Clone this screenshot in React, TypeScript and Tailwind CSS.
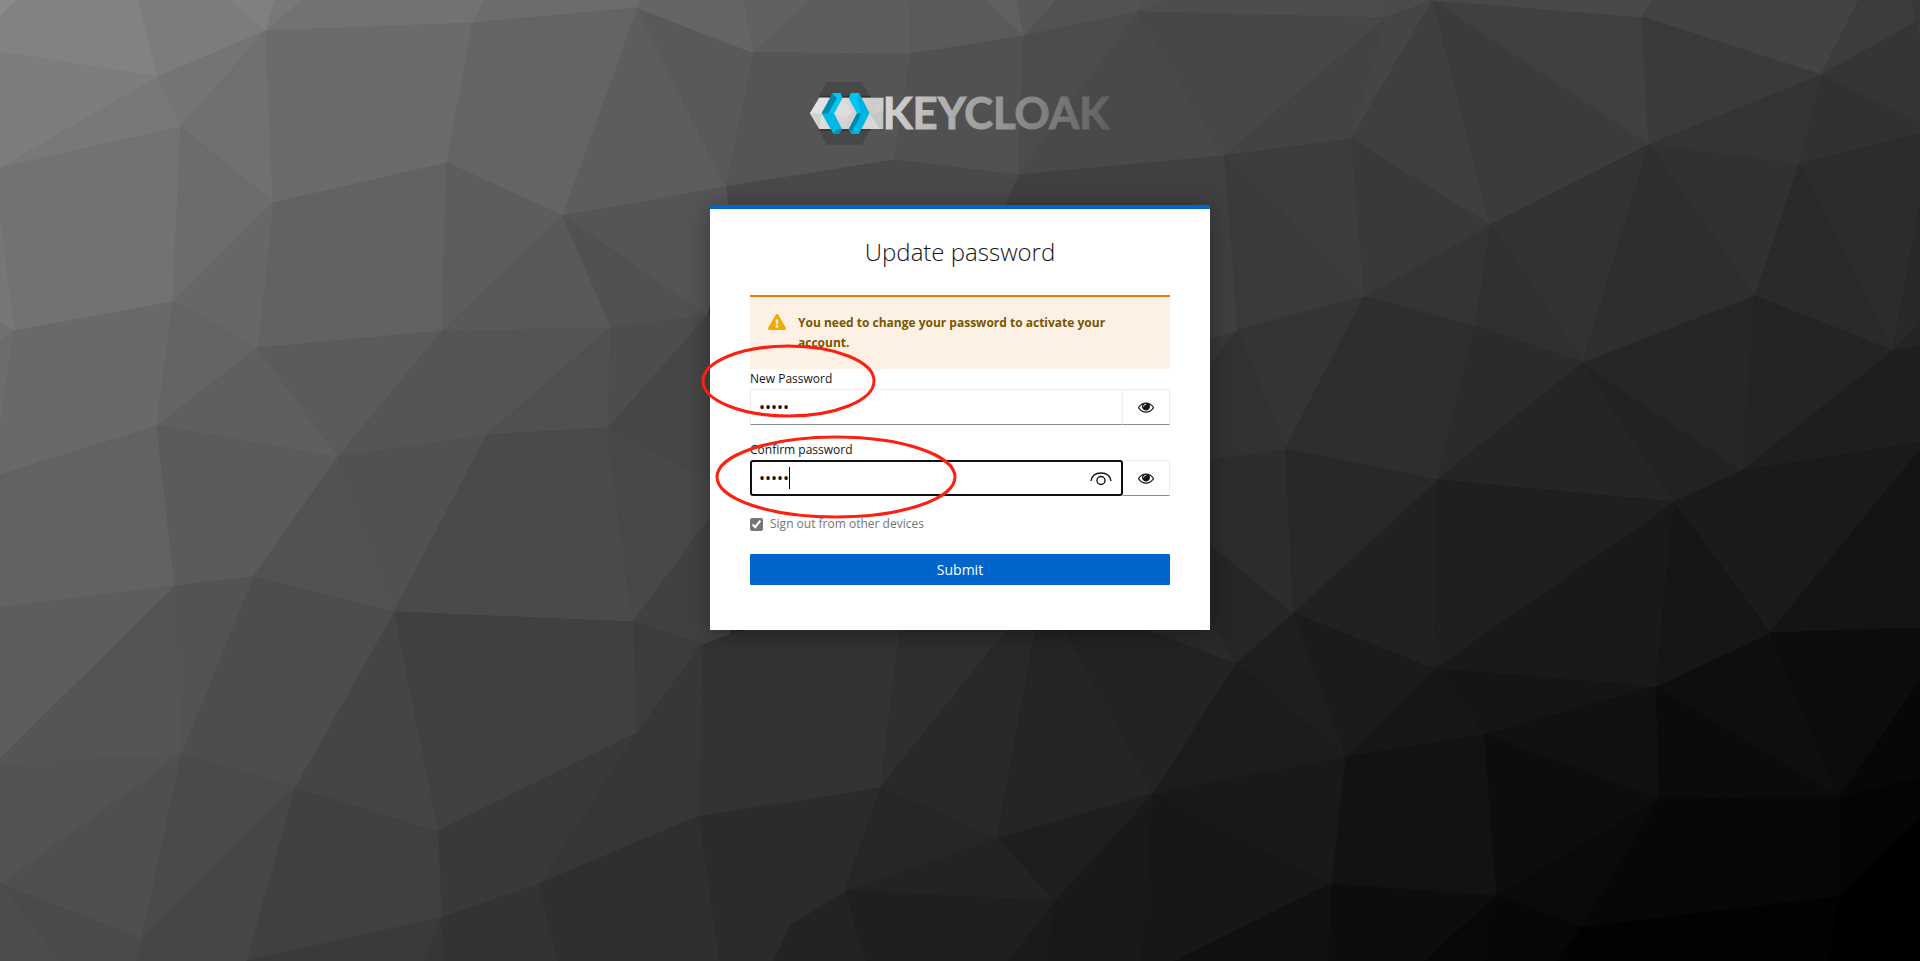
import { ReactNode } from 'react';
import { FaExclamationTriangle } from 'react-icons/fa';

// Background facets: fill + polygon points
const FACETS: [string, string][] = [
    ['#8a8a8a', '0,0 17,0 0,16'],
    ['#828282', '17,0 139,0 158,77 0,52 0,16'],
    ['#7c7c7c', '139,0 228,0 266,31 158,77'],
    ['#808080', '228,0 275,0 266,31'],
    ['#787878', '275,0 303,0 266,31'],
    ['#727272', '303,0 485,0 473,23 266,31'],
    ['#6c6c6c', '485,0 640,0 638,8 473,23'],
    ['#7d7d7d', '0,52 158,77 0,168'],
    ['#787878', '158,77 181,127 0,168'],
    ['#747474', '158,77 266,31 181,127'],
    ['#727272', '0,168 181,127 173,302 14,331 0,222'],
    ['#777777', '0,222 14,331 0,323'],
    ['#707070', '0,323 14,331 0,342'],
    ['#6c6c6c', '0,342 14,331 0,430'],
    ['#707070', '181,127 266,31 273,203'],
    ['#6c6c6c', '181,127 273,203 173,302'],
    ['#6b6b6b', '266,31 473,23 447,163 273,203'],
    ['#646464', '473,23 638,8 563,216 447,163'],
    ['#626262', '273,203 447,163 442,331 258,348'],
    ['#676767', '173,302 273,203 258,348'],
    ['#5d5d5d', '447,163 563,216 442,331'],
    ['#696969', '14,331 173,302 157,426 0,475 0,430'],
    ['#646464', '173,302 258,348 157,426'],
    ['#5f5f5f', '157,426 258,348 338,457'],
    ['#5b5b5b', '258,348 442,331 338,457'],
    ['#555555', '442,331 487,435 338,457'],
    ['#545454', '442,331 611,327 487,435'],
    ['#595959', '442,331 563,216 611,327'],
    ['#505050', '487,435 611,327 608,428'],
    ['#626262', '0,475 157,426 175,586 0,608'],
    ['#5b5b5b', '157,426 338,457 253,577 175,586'],
    ['#525252', '338,457 394,612 253,577'],
    ['#515151', '338,457 487,435 394,612'],
    ['#4a4a4a', '487,435 608,428 633,622 394,612'],
    ['#5d5d5d', '638,8 726,187 563,216'],
    ['#595959', '638,8 754,53 726,187'],
    ['#656565', '638,8 640,0 744,0 754,53'],
    ['#616161', '744,0 811,0 754,53'],
    ['#5d5d5d', '811,0 910,0 911,54 754,53'],
    ['#5a5a5a', '910,0 986,0 1024,36 911,54'],
    ['#606060', '986,0 1017,0 1024,36'],
    ['#595959', '1017,0 1057,0 1024,36'],
    ['#525252', '1057,0 1145,0 1138,12 1024,36'],
    ['#505050', '1145,0 1168,0 1138,12'],
    ['#4d4d4d', '1168,0 1384,0 1386,18 1138,12'],
    ['#555555', '754,53 911,54 894,160 726,187'],
    ['#515151', '911,54 1024,36 1018,175 894,160'],
    ['#4c4c4c', '1024,36 1138,12 1018,175'],
    ['#494949', '1138,12 1224,156 1018,175'],
    ['#474747', '1138,12 1386,18 1224,156'],
    ['#434343', '1386,18 1351,139 1224,156'],
    ['#4b4b4b', '1384,0 1433,0 1386,18'],
    ['#454545', '1386,18 1433,0 1351,139'],
    ['#3f3f3f', '1433,0 1490,225 1351,139'],
    ['#3b3b3b', '1433,0 1649,145 1490,225'],
    ['#404040', '1433,0 1642,17 1649,145'],
    ['#494949', '1433,0 1653,0 1642,17'],
    ['#434343', '1653,0 1859,0 1821,75 1642,17'],
    ['#3a3a3a', '1642,17 1821,75 1649,145'],
    ['#3c3c3c', '1859,0 1913,0 1916,22 1821,75'],
    ['#383838', '1913,0 1920,0 1920,50 1916,22'],
    ['#353535', '1821,75 1916,22 1920,50 1920,124'],
    ['#313131', '1821,75 1920,124 1920,133 1799,165'],
    ['#343434', '1649,145 1821,75 1799,165'],
    ['#2c2c2c', '1799,165 1920,133 1920,205 1893,351'],
    ['#292929', '1920,205 1893,351 1920,325'],
    ['#242424', '1920,325 1893,351 1920,347'],
    ['#313131', '1649,145 1799,165 1755,296'],
    ['#2a2a2a', '1799,165 1893,351 1755,296'],
    ['#323232', '1490,225 1649,145 1583,363'],
    ['#2e2e2e', '1649,145 1755,296 1583,363'],
    ['#303030', '1490,225 1583,363 1475,326'],
    ['#343434', '1490,225 1475,326 1364,297'],
    ['#393939', '1351,139 1490,225 1364,297'],
    ['#3d3d3d', '1224,156 1351,139 1364,297'],
    ['#3a3a3a', '1224,156 1364,297 1237,330'],
    ['#343434', '1237,330 1364,297 1285,449'],
    ['#2e2e2e', '1364,297 1475,326 1437,480 1285,449'],
    ['#2b2b2b', '1475,326 1583,363 1437,480'],
    ['#252525', '1583,363 1674,502 1437,480'],
    ['#222222', '1583,363 1742,471 1674,502'],
    ['#262626', '1583,363 1755,296 1742,471'],
    ['#242424', '1755,296 1893,351 1742,471'],
    ['#1f1f1f', '1893,351 1920,347 1920,427'],
    ['#1e1e1e', '1893,351 1920,427 1920,443 1742,471'],
    ['#1a1a1a', '1742,471 1920,443 1920,450 1770,633'],
    ['#1b1b1b', '1742,471 1770,633 1674,502'],
    ['#141414', '1920,450 1920,628 1770,633'],
    ['#0c0c0c', '1770,633 1920,628 1920,681 1839,798'],
    ['#070707', '1920,681 1920,778 1839,798'],
    ['#040404', '1839,798 1920,778 1920,820 1839,896'],
    ['#000000', '1839,896 1920,820 1920,961 1829,961'],
    ['#020202', '1839,896 1580,927 1584,961 1829,961'],
    ['#070707', '1659,799 1839,798 1839,896 1580,927'],
    ['#0a0a0a', '1659,799 1580,927 1496,896'],
    ['#0e0e0e', '1655,687 1770,633 1839,798'],
    ['#0b0b0b', '1655,687 1839,798 1659,799'],
    ['#161616', '1674,502 1770,633 1655,687'],
    ['#191919', '1674,502 1655,687 1434,669'],
    ['#1f1f1f', '1437,480 1674,502 1434,669'],
    ['#212121', '1437,480 1434,669 1293,613'],
    ['#282828', '1285,449 1437,480 1293,613'],
    ['#151515', '1434,669 1655,687 1484,735'],
    ['#171717', '1434,669 1484,735 1345,757'],
    ['#1b1b1b', '1293,613 1434,669 1345,757'],
    ['#111111', '1484,735 1655,687 1659,799'],
    ['#0d0d0d', '1484,735 1659,799 1496,896'],
    ['#121212', '1345,757 1484,735 1496,896 1331,884'],
    ['#0d0d0d', '1331,884 1496,896 1425,961 1328,961'],
    ['#080808', '1496,896 1484,961 1425,961'],
    ['#070707', '1496,896 1580,927 1557,961 1484,961'],
    ['#030303', '1580,927 1584,961 1557,961'],
    ['#191919', '1153,793 1345,757 1331,884'],
    ['#171717', '1153,793 1331,884 1175,961 1140,961'],
    ['#111111', '1331,884 1328,961 1175,961'],
    ['#1e1e1e', '1236,663 1293,613 1345,757'],
    ['#1c1c1c', '1236,663 1345,757 1153,793'],
    ['#191919', '1153,793 1141,961 1118,961 1055,901'],
    ['#181818', '1055,901 1118,961 1048,961'],
    ['#1a1a1a', '1055,901 1048,961 1008,961'],
    ['#1e1e1e', '997,838 1153,793 1055,901'],
    ['#232323', '997,838 1055,901 845,891'],
    ['#1f1f1f', '845,891 1055,901 1008,961 865,961'],
    ['#232323', '845,891 865,961 773,961 790,925'],
    ['#2b2b2b', '699,816 881,787 845,891 790,925 773,961 719,961'],
    ['#262626', '881,787 997,838 845,891'],
    ['#333333', '702,644 762,625 901,625 881,787 699,816'],
    ['#2f2f2f', '901,625 1011,625 881,787'],
    ['#292929', '1011,625 1037,625 997,838 881,787'],
    ['#252525', '1037,625 1063,625 1153,793 997,838'],
    ['#232323', '1063,625 1135,625 1236,663 1153,793'],
    ['#2a2a2a', '1135,625 1205,600 1236,663'],
    ['#262626', '1205,610 1205,540 1293,613 1236,663'],
    ['#2d2d2d', '1285,449 1293,613 1205,540 1205,450'],
    ['#323232', '1237,330 1285,449 1205,460 1205,370'],
    ['#383838', '1205,340 1237,330 1205,370'],
    ['#404040', '1018,175 1224,156 1237,330 1205,340 1000,340 1000,218'],
    ['#494949', '894,160 1018,175 1000,218 1000,260 722,260 726,187'],
    ['#555555', '563,216 726,187 730,230 707,316'],
    ['#515151', '563,216 707,316 611,327'],
    ['#4d4d4d', '611,327 707,316 608,428'],
    ['#464646', '608,428 707,316 730,300 730,491'],
    ['#484848', '608,428 730,491 633,622'],
    ['#414141', '633,622 730,491 730,634 702,644'],
    ['#3c3c3c', '633,622 702,644 637,733'],
    ['#373737', '637,733 702,644 699,816'],
    ['#363636', '637,733 699,816 539,884'],
    ['#404040', '394,612 633,622 637,733 438,831'],
    ['#393939', '438,831 637,733 539,884 441,918'],
    ['#2f2f2f', '539,884 699,816 719,961 558,961'],
    ['#333333', '441,918 539,884 558,961 445,961'],
    ['#363636', '441,918 445,961 423,961'],
    ['#404040', '295,787 438,831 441,918 246,961'],
    ['#3a3a3a', '246,961 441,918 423,961'],
    ['#454545', '295,787 394,612 438,831'],
    ['#4d4d4d', '253,577 394,612 295,787 181,754'],
    ['#4a4a4a', '181,754 295,787 141,939'],
    ['#474747', '141,939 295,787 246,961'],
    ['#464646', '141,939 246,961 136,961'],
    ['#4f4f4f', '0,884 181,754 141,939'],
    ['#5d5d5d', '0,608 175,586 0,759'],
    ['#555555', '175,586 181,754 0,765 0,759'],
    ['#535353', '175,586 253,577 181,754'],
    ['#535353', '0,765 181,754 0,884'],
    ['#4a4a4a', '0,884 141,939 136,961 60,961'],
    ['#4d4d4d', '0,884 60,961 0,961'],
];

function PolygonBackground() {
    return (
        <svg
            className="absolute inset-0 w-full h-full"
            viewBox="0 0 1920 961"
            preserveAspectRatio="xMidYMid slice"
            aria-hidden="true"
        >
            {FACETS.map(([fill, points], i) => (
                <polygon key={i} points={points} fill={fill} stroke={fill} strokeWidth="1" strokeLinejoin="round" />
            ))}
        </svg>
    );
}

function KeycloakLogo() {
    return (
        <svg width="308" height="72" viewBox="0 0 924 216" role="img" aria-label="Keycloak">
            <defs>
                <linearGradient id="kc-text" gradientUnits="userSpaceOnUse" x1="240" y1="0" x2="912" y2="40">
                    <stop offset="0" stopColor="#d4d4d4" />
                    <stop offset="0.3" stopColor="#adadad" />
                    <stop offset="0.65" stopColor="#868686" />
                    <stop offset="1" stopColor="#606060" />
                </linearGradient>
                <linearGradient id="kc-band" x1="0" y1="0" x2="1" y2="0.3">
                    <stop offset="0" stopColor="#ececec" />
                    <stop offset="1" stopColor="#c6c6c6" />
                </linearGradient>
            </defs>
            <polygon points="62,12 168,12 218,106 168,200 62,200 14,106" fill="#484848" />
            <path d="M40 56H194M40 156H194" stroke="#3a3232" strokeWidth="5" />
            <polygon points="12,106 40,59 232,59 232,153 40,153" fill="url(#kc-band)" />
            <polygon points="12,106 40,59 70,59 47,106" fill="#e2e2e2" />
            <polygon points="12,106 47,106 40,153" fill="#d2d2d2" />
            <polygon points="84,106 108,70 140,100 120,120" fill="#dedede" />
            <polygon points="190,106 232,59 232,100" fill="#cecece" />
            <polygon points="190,106 222,153 170,153" fill="#d8d8d8" />

            <polygon points="47,106 80,45 103,45 109,60 84,106 108,153 99,167 82,167" fill="#00b8e3" />
            <polygon points="47,106 79,48 93,60 68,106" fill="#008aaa" />
            <polygon points="80,45 103,45 109,60 84,106 68,106 93,60" fill="#00c6f2" />
            <polygon points="82,167 92,153 108,153 99,167" fill="#0095b8" />

            <polygon points="128,60 135,45 159,45 190,106 158,167 136,167 128,154 153,106" fill="#00c6f2" />
            <polygon points="153,60 159,45 190,106 168,106" fill="#00b0dc" />
            <polygon points="153,106 168,106 137,165 128,154" fill="#008aaa" />
            <polygon points="168,106 190,106 158,167 137,165" fill="#00b8e3" />

            <text
                x="230"
                y="153"
                fontSize="131"
                fontWeight="700"
                fontFamily="Lato, sans-serif"
                fill="url(#kc-text)"
                stroke="url(#kc-text)"
                strokeWidth="3"
            >
                KEYCLOAK
            </text>
        </svg>
    );
}

function EyeIcon() {
    return (
        <svg width="16" height="16" viewBox="0 0 1792 1792" fill="currentColor" aria-hidden="true">
            <path d="M1664 960q-152-236-381-353 61 104 61 225 0 185-131.5 316.5t-316.5 131.5-316.5-131.5-131.5-316.5q0-121 61-225-229 117-381 353 133 205 333.5 326.5t434.5 121.5 434.5-121.5 333.5-326.5zm-720-384q0-20-14-34t-34-14q-125 0-214.5 89.5t-89.5 214.5q0 20 14 34t34 14 34-14 14-34q0-86 61-147t147-61q20 0 34-14t14-34zm848 384q0 34-20 69-140 230-376.5 368.5t-499.5 138.5-499.5-139-376.5-368q-20-35-20-69t20-69q140-229 376.5-368t499.5-139 499.5 139 376.5 368q20 35 20 69z" />
        </svg>
    );
}

interface PasswordFieldProps {
    id: string;
    label: string;
    active?: boolean;
    children?: ReactNode;
}

function PasswordField({ id, label, active = false, children }: PasswordFieldProps) {
    const border = active
        ? 'border-2 border-[#101010] rounded-[3px] px-[7px]'
        : 'border border-[#ededed] border-b-[#8a8d90] px-2';

    return (
        <div>
            <label htmlFor={id} className="block text-xs leading-5 text-[#151515]">
                {label}
            </label>
            <div className="flex h-9">
                <div className="relative flex-1">
                    <input
                        id={id}
                        type="password"
                        defaultValue="admin"
                        className={`block w-full h-full bg-white text-base text-[#151515] outline-none ${border}`}
                    />
                    {children}
                </div>
                <button
                    type="button"
                    aria-label="Show password"
                    className="w-[47px] flex items-center justify-center bg-white text-[#151515] border border-l-0 border-[#ededed] border-b-[#8a8d90]"
                >
                    <EyeIcon />
                </button>
            </div>
        </div>
    );
}

export default function App() {
    return (
        <div className="relative min-h-screen bg-[#2b2b2b] font-['Open_Sans',sans-serif]">
            <PolygonBackground />

            <div className="relative flex flex-col items-center pt-[78px]">
                <header className="mb-[55px]">
                    <KeycloakLogo />
                </header>

                <main className="relative w-full max-w-[500px] bg-white border-t-4 border-[#0066cc] px-10 pt-[27px] pb-[45px] shadow-[0_4px_24px_rgba(0,0,0,0.35)]">
                    <h1 className="mb-[27px] text-center text-2xl font-light text-[#151515]">Update password</h1>

                    <div role="alert" className="flex gap-3 border-t-2 border-[#ec7a08] bg-[#fdf1e5] py-4 pl-[18px] pr-10">
                        <FaExclamationTriangle size={18} className="flex-none text-[#f0ab00]" />
                        <span className="text-xs leading-5 font-bold text-[#795600]">
                            You need to change your password to activate your account.
                        </span>
                    </div>

                    <form onSubmit={(e) => e.preventDefault()}>
                        <PasswordField id="password-new" label="New Password" />

                        <div className="mt-[15px]">
                            <PasswordField id="password-confirm" label="Confirm password" active>
                                {/* Text caret */}
                                <span className="absolute left-[39px] top-[7px] h-[22px] w-px bg-black" />
                                <button type="button" aria-label="Reveal password" className="absolute right-[11px] top-[10px]">
                                    <svg width="22" height="16" viewBox="0 0 22 16" fill="none" stroke="#151515" strokeWidth="1.4" aria-hidden="true">
                                        <path d="M1 11C1.800 5.800 5.800 3 11 3s9.200 2.800 10 8" />
                                        <circle cx="11" cy="10.500" r="4" />
                                    </svg>
                                </button>
                            </PasswordField>
                        </div>

                        <label className="mt-[18px] flex items-center gap-[7px] text-xs leading-5 text-[#72767b]">
                            <input type="checkbox" defaultChecked className="size-[13px] accent-[#767676]" />
                            Sign out from other devices
                        </label>

                        <button type="submit" className="mt-5 block w-full h-[31px] bg-[#0066cc] text-sm text-white rounded-[1px]">
                            Submit
                        </button>
                    </form>

                    {/* Markup over the password fields */}
                    <svg className="absolute inset-0 w-full h-full overflow-visible pointer-events-none" aria-hidden="true">
                        <g fill="none" stroke="#fc2012" strokeWidth="3">
                            <ellipse cx="78.5" cy="172" rx="85.500" ry="35" />
                            <ellipse cx="126" cy="268" rx="119" ry="40" />
                        </g>
                    </svg>
                </main>
            </div>
        </div>
    );
}
